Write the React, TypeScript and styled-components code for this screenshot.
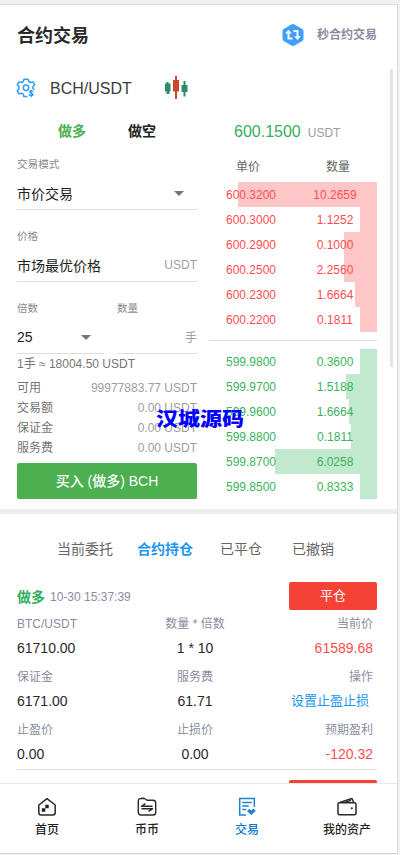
import React from "react";
import styled, { createGlobalStyle } from "styled-components";

const GlobalStyle = createGlobalStyle`
  * { box-sizing: border-box; }
  body {
    margin: 0;
    background: #f1f1f1;
    color: #2a2a2a;
    font-family: "Liberation Sans", "Noto Sans CJK SC", sans-serif;
    font-size: 14px;
  }
`;

const Page = styled.div`
  position: relative;
  width: 400px;
  height: 855px;
  padding-top: 4px;
  overflow: hidden;
`;

const Phone = styled.div`
  display: flex;
  flex-direction: column;
  width: 398px;
  height: 850px;
  background: #fff;
  border-top: 1px solid #dcdcdc;
  border-right: 1px solid #dcdcdc;
  border-bottom: 1px solid #d6d6d6;
`;

const Header = styled.header`
  display: flex;
  align-items: center;
  height: 64px;
  padding: 0 20px 4px 17px;
`;

const Title = styled.h1`
  flex: 1;
  margin: 0;
  padding-top: 1px;
  font-size: 18px;
  line-height: 26px;
  font-weight: 700;
`;

const HeaderLink = styled.span`
  margin: -3px 0 0 13px;
  font-size: 12px;
  font-weight: 700;
  color: #8b8b9e;
`;

const Scroll = styled.main`
  position: relative;
  flex: 1;
  min-height: 0;
  overflow: hidden;
`;

const ScrollThumb = styled.div`
  position: absolute;
  top: 0;
  right: 4px;
  width: 3px;
  height: 298px;
  background: #e4e4e4;
`;

const PairBar = styled.div`
  display: flex;
  align-items: center;
  height: 38px;
  padding-left: 16px;
`;

const PairName = styled.span`
  width: 115px;
  margin-left: 14px;
  padding-top: 1px;
  font-size: 16px;
  color: #3c3c3c;
`;

const TradePanel = styled.section`
  display: flex;
  justify-content: space-between;
  height: 402px;
  padding: 0 20px 0 17px;
`;

const Form = styled.div`
  display: flex;
  flex-direction: column;
  width: 180px;
`;

const SideTabs = styled.div`
  display: flex;
  gap: 42px;
  height: 47px;
  padding: 14px 0 0 41px;
`;

const SideTab = styled.span<{ $active?: boolean }>`
  line-height: 20px;
  font-weight: 700;
  font-size: 14px;
  color: ${(p) => (p.$active ? "#4caf50" : "#222")};
`;

const FieldRow = styled.div`
  display: flex;
  justify-content: space-between;
`;

const Field = styled.div<{ $width?: number }>`
  width: ${(p) => p.$width ?? 180}px;
  height: 72px;
`;

const FieldLabel = styled.div`
  height: 21px;
  font-size: 10.6px;
  line-height: 20px;
  color: #8a8a8a;
`;

const FieldValue = styled.div<{ $caret?: boolean }>`
  display: flex;
  align-items: center;
  justify-content: space-between;
  height: 35px;
  padding-right: ${(p) => (p.$caret ? 13 : 0)}px;
  padding-top: 1px;
  border-bottom: 1px solid #dedede;
  color: #222;
`;

const Caret = styled.i`
  margin-top: 2px;
  border: 5px solid transparent;
  border-top-color: #757575;
  border-bottom: 0;
`;

const Unit = styled.span`
  margin-left: auto;
  font-size: 12px;
  color: #9e9e9e;
`;

const Approx = styled.div`
  height: 21px;
  margin-top: -16px;
  font-size: 12px;
  line-height: 21px;
  color: #757575;
`;

const Summary = styled.div`
  display: grid;
  grid-auto-rows: 20px;
  margin-top: 3px;
`;

const SummaryRow = styled.div`
  display: flex;
  justify-content: space-between;
  font-size: 12px;
  line-height: 20px;
  color: #757575;
`;

const Muted = styled.span`
  color: #9e9e9e;
`;

const BuyButton = styled.button`
  height: 36px;
  margin-top: 5px;
  padding: 0 0 2px;
  border: 0;
  border-radius: 2px;
  background: #4caf50;
  color: #fff;
  font: 500 14px "Liberation Sans", "Noto Sans CJK SC", sans-serif;
`;

const Book = styled.div`
  width: 168px;
`;

const LastPrice = styled.div`
  display: flex;
  align-items: baseline;
  gap: 7px;
  height: 47px;
  padding: 14px 0 0 25px;
  font-size: 16px;
  line-height: 22px;
  color: #32b05c;
`;

const LastUnit = styled.span`
  font-size: 12px;
  color: #9e9e9e;
`;

const BookHead = styled.div`
  display: flex;
  gap: 66px;
  height: 28px;
  padding-left: 27px;
  font-size: 12px;
  line-height: 26px;
  color: #666;
`;

const BookRow = styled.div<{ $side: "ask" | "bid"; $depth: number }>`
  display: grid;
  grid-template-columns: 84px 84px;
  height: 25px;
  font-size: 12px;
  line-height: 27px;
  text-align: center;
  color: ${(p) => (p.$side === "ask" ? "#ff4d4f" : "#39b55d")};
  background: linear-gradient(${(p) => (p.$side === "ask" ? "#ffc6c8, #ffc6c8" : "#c2e8ce, #c2e8ce")})
    right / ${(p) => p.$depth}px 100% no-repeat;
`;

const BookDivider = styled.div`
  height: 1px;
  margin: 8px 0;
  background: #dedede;
`;

const Band = styled.div`
  height: 5px;
  background: #ededed;
`;

const OrderTabs = styled.nav`
  display: flex;
  height: 68px;
  padding: 11px 0 0 45px;
`;

const OrderTab = styled.span<{ $active?: boolean }>`
  min-width: 72px;
  padding: 0 12px;
  line-height: 48px;
  text-align: center;
  font-weight: ${(p) => (p.$active ? 700 : 400)};
  color: ${(p) => (p.$active ? "#2196f3" : "#666")};
`;

const Order = styled.article`
  height: 188px;
  margin: 0 20px 10px 17px;
  border-bottom: 1px solid #dedede;
`;

const OrderHead = styled.div`
  display: flex;
  align-items: center;
  height: 28px;
`;

const OrderSide = styled.span`
  font-weight: 700;
  color: #32b05c;
`;

const OrderTime = styled.span`
  flex: 1;
  margin-left: 5px;
  padding-top: 1px;
  font-size: 12px;
  color: #8c8c9f;
`;

const CloseButton = styled.button`
  width: 88px;
  height: 28px;
  padding: 0 0 3px;
  border: 0;
  border-radius: 2px;
  background: #f44336;
  color: #fff;
  font: 13px "Liberation Sans", "Noto Sans CJK SC", sans-serif;
`;

const Stats = styled.div`
  display: grid;
  grid-template-columns: 119px 118px 119px;
  grid-auto-rows: 53px;
  margin-right: 4px;
`;

const Stat = styled.div<{ $align: string }>`
  text-align: ${(p) => p.$align};
`;

const StatLabel = styled.div`
  height: 26px;
  font-size: 12px;
  line-height: 28px;
  color: #8c8c9f;
`;

const StatValue = styled.div<{ $tone?: "red" }>`
  font-size: 14px;
  line-height: 25px;
  color: ${(p) => (p.$tone ? "#ff4d4f" : "#2a2a2a")};
`;

const StatLink = styled.div`
  padding-right: 4px;
  font-size: 13px;
  line-height: 24px;
  color: #2196f3;
`;

const BottomNav = styled.nav`
  display: grid;
  grid-template-columns: repeat(4, 100px);
  flex: none;
  height: 70px;
  margin: 0 0 0 -3px;
  border-top: 1px solid #e8e8e8;
`;

const NavItem = styled.div<{ $active?: boolean }>`
  display: flex;
  flex-direction: column;
  align-items: center;
  padding-top: 13px;
  font-size: 12px;
  line-height: 26px;
  font-weight: 500;
  color: ${(p) => (p.$active ? "#087bd0" : "#1f1f1f")};
  svg { display: block; flex: none; }
`;

const Watermark = styled.div`
  position: absolute;
  left: 156px;
  top: 405px;
  font: 900 22px/24px "Noto Sans CJK SC", sans-serif;
  color: #0000ff;
  transform: scaleY(0.86);
  white-space: nowrap;
`;

const SwapIcon = () => (
  <svg width="22" height="24" viewBox="0 0 22 24">
    <path d="M9.5 1.400a3 3 0 0 1 3 0l7 4A3 3 0 0 1 21.500 8v8a3 3 0 0 1-2 2.600l-7 4a3 3 0 0 1-3 0l-7-4A3 3 0 0 1 .5 16V8a3 3 0 0 1 2-2.600z" fill="#409eff" />
    <path d="M6.500 9v6.500h4M11.500 8h4v7" fill="none" stroke="#fff" strokeWidth="2" />
    <path d="M3.200 10.600 6.500 6.800l3.300 3.800zM12.200 13.200h6.600l-3.300 3.800z" fill="#fff" />
  </svg>
);

const GearIcon = () => (
  <svg width="20" height="20" viewBox="0 0 20 20" fill="none" stroke="#2f9cf8" strokeWidth="1.500" strokeLinecap="round" strokeLinejoin="round">
    <path d="M11 18.500H7.800L7.300 16.200q-1-.4-1.800-1l-2.600.6-1.700-2.900L3 11.300q-.3-1.500 0-3L1.200 6.800 2.900 3.900l2.700.6 1.600-1L8 1.300h4l.8 2.200 1.600 1 2.700-.6 1.700 2.900-1.900 1.700v2l1 1" />
    <circle cx="10" cy="9.700" r="2.700" />
    <path d="M16.800 13.300q-3-1-3.200.5c-.2 1.500 3.700.9 3.400 2.700-.3 1.400-2.600 1.200-3.900.4M15.200 12.200v6.500" strokeWidth="1.300" />
  </svg>
);

const CandlesIcon = () => (
  <svg width="23" height="24" viewBox="0 0 23 24">
    <path d="M0 7.500h1.500V6h2v1.500H5.500v8H4.500v2.500h-3v-2.500H0zM16.500 9h2V5h2v4h2v7h-2v4.500h-2V16h-2z" fill="#2b8f67" />
    <path d="M8 4h2V0h2v4h2v11.500h-2V23h-2v-7.500H8z" fill="#c9482f" />
  </svg>
);

const HomeIcon = () => (
  <svg width="20" height="20" viewBox="0 0 20 20">
    <path d="M1.800 8 10 1.700 18.200 8v7.500q0 2.500-2.500 2.500H4.300q-2.500 0-2.500-2.500z" fill="none" stroke="#292929" strokeWidth="1.500" strokeLinejoin="round" />
    <path d="M4.800 11.300h3.500v3.400H4.800zM8.300 7.800h3.400v3.500H8.300z" fill="#222" />
  </svg>
);

const CoinIcon = () => (
  <svg width="20" height="20" viewBox="0 0 20 20" fill="none" stroke="#292929" strokeWidth="1.400" strokeLinejoin="round">
    <path d="M1.300 4Q1.300 1.500 3.700 1.500L7 1.200l3 2.100h6q2.700 0 2.700 2.700v9.200q0 2.800-2.700 2.800H4q-2.700 0-2.700-2.800z" />
    <path d="M15.500 9.300H4.500l4-2.600M4.500 11.800h11l-4 2.600" />
  </svg>
);

const TradeIcon = () => (
  <svg width="20" height="20" viewBox="0 0 20 20" fill="none" stroke="#1f82cf" strokeWidth="1.500">
    <path d="M17.300 10V1.500H2.700V18H9M5.200 5.500h9.600M5.200 9h6.500M5.200 12.500h4" />
    <path d="m10 14.200 2.300-2.400 2 1.700 2-2 2.500 2.200-4.400 4.400z" fill="#1f82cf" stroke="none" />
  </svg>
);

const WalletIcon = () => (
  <svg width="20" height="20" viewBox="0 0 20 20" fill="none" stroke="#292929" strokeWidth="1.500" strokeLinejoin="round">
    <path d="M2 5.800h15.500q1.500 0 1.500 1.500v9q0 1.500-1.500 1.500h-15Q1 17.800 1 16.300V7.200q0-1 1-1.400L15 1.500l1.700 4" />
    <path d="m8 5.400 6-2" />
    <circle cx="14.800" cy="11.300" r="1" fill="#222" stroke="none" />
  </svg>
);

type Level = [string, string, number];

const asks: Level[] = [
  ["600.3200", "10.2659", 139],
  ["600.3000", "1.1252", 17],
  ["600.2900", "0.1000", 33],
  ["600.2500", "2.2560", 33],
  ["600.2300", "1.6664", 22],
  ["600.2200", "0.1811", 17],
];

const bids: Level[] = [
  ["599.9800", "0.3600", 17],
  ["599.9700", "1.5188", 31],
  ["599.9600", "1.6664", 28],
  ["599.8800", "0.1811", 26],
  ["599.8700", "6.0258", 102],
  ["599.8500", "0.8333", 17],
];

const Levels = ({ side, rows }: { side: "ask" | "bid"; rows: Level[] }) => (
  <>
    {rows.map(([price, amount, depth]) => (
      <BookRow key={price} $side={side} $depth={depth}>
        <span>{price}</span>
        <span>{amount}</span>
      </BookRow>
    ))}
  </>
);

const summary = [
  ["可用", "99977883.77 USDT"],
  ["交易额", "0.00 USDT"],
  ["保证金", "0.00 USDT"],
  ["服务费", "0.00 USDT"],
];

export default function App() {
  return (
    <Page>
      <GlobalStyle />
      <Phone>
        <Header>
          <Title>合约交易</Title>
          <SwapIcon />
          <HeaderLink>秒合约交易</HeaderLink>
        </Header>
        <Scroll>
          <PairBar>
            <GearIcon />
            <PairName>BCH/USDT</PairName>
            <CandlesIcon />
          </PairBar>
          <TradePanel>
            <Form>
              <SideTabs>
                <SideTab $active>做多</SideTab>
                <SideTab>做空</SideTab>
              </SideTabs>
              <Field>
                <FieldLabel>交易模式</FieldLabel>
                <FieldValue $caret>市价交易<Caret /></FieldValue>
              </Field>
              <Field>
                <FieldLabel>价格</FieldLabel>
                <FieldValue>市场最优价格<Unit>USDT</Unit></FieldValue>
              </Field>
              <FieldRow>
                <Field $width={87}>
                  <FieldLabel>倍数</FieldLabel>
                  <FieldValue $caret>25<Caret /></FieldValue>
                </Field>
                <Field $width={80}>
                  <FieldLabel>数量</FieldLabel>
                  <FieldValue><Unit>手</Unit></FieldValue>
                </Field>
              </FieldRow>
              <Approx>1手 ≈ 18004.50 USDT</Approx>
              <Summary>
                {summary.map(([label, value]) => (
                  <SummaryRow key={label}>
                    <span>{label}</span>
                    <Muted>{value}</Muted>
                  </SummaryRow>
                ))}
              </Summary>
              <BuyButton>买入 (做多) BCH</BuyButton>
            </Form>
            <Book>
              <LastPrice>600.1500<LastUnit>USDT</LastUnit></LastPrice>
              <BookHead><span>单价</span><span>数量</span></BookHead>
              <Levels side="ask" rows={asks} />
              <BookDivider />
              <Levels side="bid" rows={bids} />
            </Book>
          </TradePanel>
          <Band />
          <OrderTabs>
            <OrderTab>当前委托</OrderTab>
            <OrderTab $active>合约持仓</OrderTab>
            <OrderTab>已平仓</OrderTab>
            <OrderTab>已撤销</OrderTab>
          </OrderTabs>
          <Order>
            <OrderHead>
              <OrderSide>做多</OrderSide>
              <OrderTime>10-30 15:37:39</OrderTime>
              <CloseButton>平仓</CloseButton>
            </OrderHead>
            <Stats>
              <Stat $align="left"><StatLabel>BTC/USDT</StatLabel><StatValue>61710.00</StatValue></Stat>
              <Stat $align="center"><StatLabel>数量 * 倍数</StatLabel><StatValue>1 * 10</StatValue></Stat>
              <Stat $align="right"><StatLabel>当前价</StatLabel><StatValue $tone="red">61589.68</StatValue></Stat>
              <Stat $align="left"><StatLabel>保证金</StatLabel><StatValue>6171.00</StatValue></Stat>
              <Stat $align="center"><StatLabel>服务费</StatLabel><StatValue>61.71</StatValue></Stat>
              <Stat $align="right"><StatLabel>操作</StatLabel><StatLink>设置止盈止损</StatLink></Stat>
              <Stat $align="left"><StatLabel>止盈价</StatLabel><StatValue>0.00</StatValue></Stat>
              <Stat $align="center"><StatLabel>止损价</StatLabel><StatValue>0.00</StatValue></Stat>
              <Stat $align="right"><StatLabel>预期盈利</StatLabel><StatValue $tone="red">-120.32</StatValue></Stat>
            </Stats>
          </Order>
          <Order>
            <OrderHead>
              <OrderTime />
              <CloseButton />
            </OrderHead>
          </Order>
          <ScrollThumb />
        </Scroll>
        <BottomNav>
          <NavItem><HomeIcon />首页</NavItem>
          <NavItem><CoinIcon />币币</NavItem>
          <NavItem $active><TradeIcon />交易</NavItem>
          <NavItem><WalletIcon />我的资产</NavItem>
        </BottomNav>
      </Phone>
      <Watermark>汉城源码</Watermark>
    </Page>
  );
}
